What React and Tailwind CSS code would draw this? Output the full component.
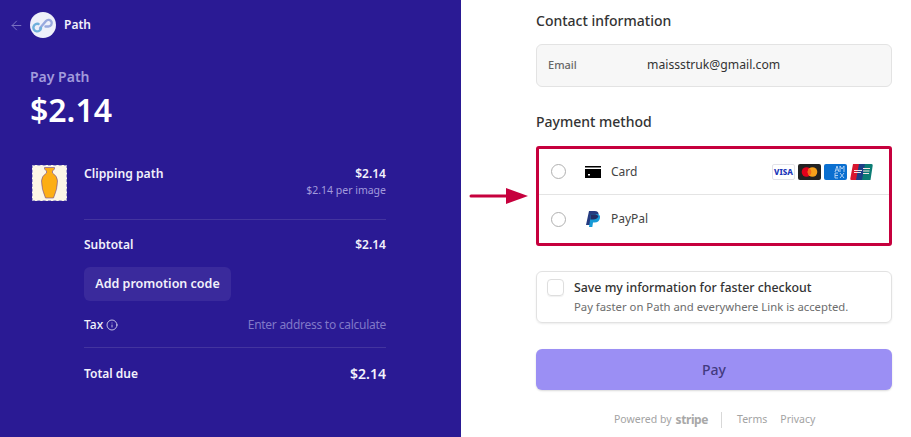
import { ArrowLeft, Info } from 'lucide-react';

function CardLogos() {
  return (
    <div className="flex items-center gap-[3px]">
      <div className="w-[23px] h-[16px] bg-white border border-[#e3e3e8] rounded-[2px] flex items-center justify-center text-[8px] leading-none font-extrabold text-[#1a35b8]">VISA</div>
      <svg width="23" height="16" viewBox="0 0 23 16">
        <rect width="23" height="16" rx="2" fill="#222" />
        <circle cx="8.500" cy="8" r="4.800" fill="#e3001b" />
        <circle cx="14.500" cy="8" r="4.800" fill="#f7a11a" />
        <path d="M11.500 4.200a4.800 4.800 0 0 1 0 7.600a4.800 4.800 0 0 1 0-7.600z" fill="#f26a1b" />
      </svg>
      <svg width="23" height="16" viewBox="0 0 23 16">
        <rect width="23" height="16" rx="2" fill="#0a6fd0" />
        <g fill="none" stroke="#bcd8f6" strokeWidth="0.900">
          <path d="M11 8l2-6 2 6M12 6h2M16 8V2l2 3 2-3v6" />
          <path d="M11 14V9h3M11 11.500h3M11 14h3M16 9l4 5M20 9l-4 5" />
        </g>
      </svg>
      <svg width="23" height="16" viewBox="0 0 23 16">
        <path d="M3 0h7L7 16H1.500Q0 16 .3 14.500z" fill="#d8162f" />
        <path d="M9 0h7l-3 16H6z" fill="#1c3f86" />
        <path d="M15 0h6.500q1.500 0 1.200 1.500L20.500 16H12z" fill="#0b7c74" />
        <path d="M4 6.500h8M4 8.500h7M13 4.500h7M13 7h6.500M13 9.500h6" stroke="#f6e3e3" strokeWidth="1" />
      </svg>
    </div>
  );
}

function Radio() {
  return <div className="w-[15px] h-[15px] rounded-full border border-[#b0b0b0] bg-white shrink-0" />;
}

export default function App() {
  return (
    <div className="relative w-[911px] h-[437px] overflow-hidden flex bg-white font-['Noto_Sans','Open_Sans',sans-serif] text-[#1a1a1a]">
      {/* Summary panel */}
      <aside className="w-[461px] shrink-0 bg-[#2a1a94] text-[#f2f1fb] flex flex-col">
        <header className="flex items-center h-[26px] mt-[12px] pl-[9px]">
          <ArrowLeft className="w-[15px] h-[15px] text-[#7f76c4]" strokeWidth={1.5} />
          <div className="ml-[6px] w-[26px] h-[26px] rounded-full bg-[#eef0fa] flex items-center justify-center">
            <svg width="22" height="22" viewBox="0 0 22 22" fill="none" strokeWidth="2.400" strokeLinecap="round">
              <path d="M8 14 L14 7 A3.300 3.300 0 1 1 16.500 12.500 L13.500 12.500" stroke="#98a9de" />
              <path d="M9 14 A3.800 3.800 0 1 1 6.500 10" stroke="#6fb0dc" />
            </svg>
          </div>
          <span className="ml-[8px] text-[12px] leading-none font-semibold">Path</span>
        </header>

        <div className="ml-[30px] mt-[30px] text-[14px] leading-[18px] font-semibold text-[#a29bdc]">Pay Path</div>
        <div className="ml-[30px] mt-[3px] text-[32px] leading-[42px] font-semibold text-white">$2.14</div>

        <div className="ml-[32px] mr-[75px] mt-[34px] flex">
          <div className="w-[35px] h-[36px] shrink-0 bg-[#fdf6e6] border border-dashed border-[#a9a4cf] flex items-center justify-center">
            <svg width="17" height="32" viewBox="0 0 17 32">
              <path d="M3.500 .5h10v1.500l-2 2v2q5 3 5 8 0 8-4 17h-8q-4-9-4-17 0-5 5-8v-2l-2-2z" fill="#fdae14" stroke="#6a4aa0" strokeWidth="0.600" />
            </svg>
          </div>
          <div className="ml-[17px] flex-1">
            <div className="mt-[1px] flex justify-between text-[12.200px] leading-[16px] font-semibold">
              <span>Clipping path</span>
              <span className="text-[12px]">$2.14</span>
            </div>
            <div className="text-right text-[10.500px] leading-[17px] text-[#a29bdc]">$2.14 per image</div>
          </div>
        </div>

        <div className="ml-[84px] mr-[75px] mt-[18px] border-t border-[#43349f] pt-[17px]">
          <div className="flex justify-between text-[12px] leading-[16px] font-semibold">
            <span>Subtotal</span>
            <span>$2.14</span>
          </div>
          <div className="mt-[14px] w-[147px] h-[34px] rounded-[6px] bg-[#3a2a9c] flex items-center justify-center text-[12.500px] font-semibold">Add promotion code</div>
          <div className="mt-[16px] flex justify-between items-center text-[12px] leading-[16px]">
            <span className="flex items-center gap-[3px] font-medium">Tax <Info className="w-[12px] h-[12px]" strokeWidth={1.5} /></span>
            <span className="text-[#8078c8] tracking-[-0.27px]">Enter address to calculate</span>
          </div>
          <div className="mt-[14px] border-t border-[#43349f] pt-[17px] flex justify-between items-center font-semibold">
            <span className="text-[12px] leading-[18px]">Total due</span>
            <span className="text-[14px] leading-[18px]">$2.14</span>
          </div>
        </div>
      </aside>

      {/* Checkout form */}
      <main className="ml-[75px] w-[356px] flex flex-col">
        <h2 className="mt-[11px] text-[14px] leading-[20px] font-medium text-[#333]">Contact information</h2>
        <div className="mt-[13px] h-[43px] rounded-[6px] border border-[#e3e3e3] bg-[#f7f7f7] flex items-center text-[12.200px]">
          <span className="ml-[11px] w-[99px] font-medium text-[#666] text-[11px]">Email</span>
          <span className="text-[#333]">maissstruk@gmail.com</span>
        </div>

        <h2 className="mt-[25px] text-[14px] leading-[20px] font-medium text-[#333]">Payment method</h2>
        <div className="mt-[14px] h-[100px] rounded-[3px] border-[3px] border-[#c6003d] flex flex-col text-[12px] text-[#444]">
          <div className="h-[46px] flex items-center pl-[12px] pr-[16px] border-b border-[#e4e4e4]">
            <Radio />
            <svg className="ml-[19px]" width="16" height="12" viewBox="0 0 16 12">
              <path d="M0 0h16v1.500H0zM0 3h16v9H0z" fill="#000" />
              <rect x="3" y="8" width="2" height="1.500" fill="#fff" />
            </svg>
            <span className="ml-[10px]">Card</span>
            <div className="ml-auto"><CardLogos /></div>
          </div>
          <div className="flex-1 flex items-center pl-[12px]">
            <Radio />
            <svg className="ml-[20px]" width="14" height="16" viewBox="0 0 14 16">
              <path d="M3 0h5.500C11.500 0 13 1.500 12.500 4c-.6 3-2.500 4.500-5.500 4.500H5L4 14H0z" fill="#253b80" />
              <path d="M5 3h5c3 0 4.500 1.500 4 4-.6 3-2.500 4.500-5.500 4.500H7L6.300 16H3z" fill="#179bd7" />
              <path d="M4.400 8.500h2.800c2.500 0 4.300-1 5.200-3-.5-1-1.300-1.800-2.900-2.300H5z" fill="#222d65" />
            </svg>
            <span className="ml-[11px]">PayPal</span>
          </div>
        </div>

        <div className="mt-[25px] h-[52px] rounded-[6px] border border-[#e2e2e2] shadow-[0_1px_2px_rgba(0,0,0,0.08)] flex pl-[10px] pt-[7px]">
          <div className="w-[17px] h-[17px] rounded-[4px] border border-[#dedede] shadow-[0_1px_1px_rgba(0,0,0,0.06)] shrink-0" />
          <div className="ml-[10px]">
            <div className="text-[12.350px] leading-[17px] font-medium text-[#333]">Save my information for faster checkout</div>
            <div className="mt-[2px] text-[11.300px] leading-[17px] text-[#6d6d6d]">Pay faster on Path and everywhere Link is accepted.</div>
          </div>
        </div>

        <button className="mt-[26px] h-[41px] rounded-[6px] bg-[#9b8ff4] shadow-[0_1px_2px_rgba(0,0,0,0.15)] text-[14px] font-medium text-[#423a80]">Pay</button>

        <div className="mt-[22px] ml-[78px] flex items-center text-[10.500px] text-[#a3a3a3]">
          <span>Powered by</span>
          <span className="ml-[4px] text-[12px] leading-none font-bold tracking-[-0.4px] text-[#a8a8a8]">stripe</span>
          <span className="ml-[13px] w-px h-[16px] bg-[#d8d8d8]" />
          <span className="ml-[15px]">Terms</span>
          <span className="ml-[13px]">Privacy</span>
        </div>
      </main>

      {/* Annotation arrow */}
      <svg className="absolute left-[469px] top-[186px]" width="60" height="20" viewBox="0 0 60 20">
        <path d="M2 10h36" stroke="#c6003d" strokeWidth="3" strokeLinecap="round" />
        <path d="M37 2l22 8-22 8z" fill="#c6003d" />
      </svg>
    </div>
  );
}
